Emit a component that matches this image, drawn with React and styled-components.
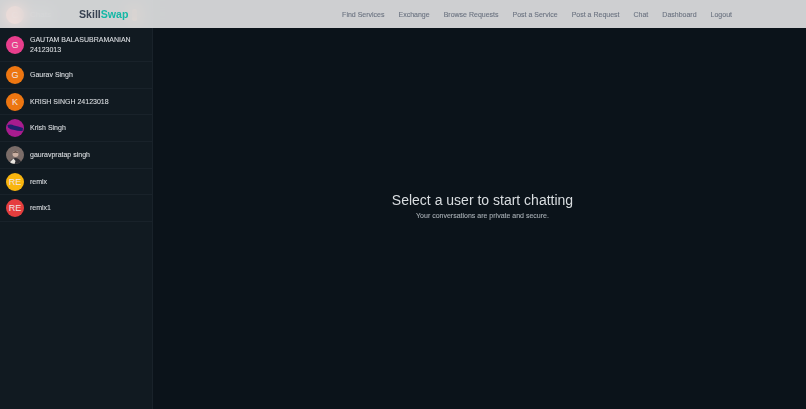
import React from 'react';
import styled, { createGlobalStyle } from 'styled-components';

const Global = createGlobalStyle`
  html, body { margin: 0; padding: 0; height: 100%; background: #0b131a; }
  #root { height: 100%; }
  * { box-sizing: border-box; }
  body { font-family: "Liberation Sans", Arial, sans-serif; overflow: hidden; }
`;

const Page = styled.div`
  display: flex;
  height: 409px;
  width: 806px;
  position: relative;
  overflow: hidden;
`;
const Sidebar = styled.aside`
  width: 153px;
  flex: none;
  background: #111a21;
  border-right: 1px solid #19222a;
  display: flex;
  flex-direction: column;
`;
const SideHead = styled.div`
  height: 29px;
  flex: none;
  display: flex;
  align-items: center;
  justify-content: space-between;
  padding: 0 15px 0 6px;
`;
const HeadLeft = styled.div`
  display: flex;
  align-items: center;
  gap: 6px;
  color: #e6e8ea;
  font-size: 8px;
`;
const Spot = styled.div`
  width: 5px;
  height: 12px;
  background: #f97316;
  border-radius: 3px;
`;
const Row = styled.div`
  display: flex;
  align-items: center;
  gap: 6px;
  padding: 0 6px;
  height: ${p => p.$h}px;
  flex: none;
  border-bottom: 1px solid #19222a;
`;
const Avatar = styled.div`
  width: 18px;
  height: 18px;
  border-radius: 50%;
  flex: none;
  overflow: hidden;
  background: ${p => p.$bg};
  color: #f0e6e6;
  font-size: 9px;
  display: flex;
  align-items: center;
  justify-content: center;
`;
const Name = styled.div`
  color: #dadde0;
  font-size: 7px;
  line-height: 10px;
  -webkit-text-stroke: 0.1px #dadde0;
  filter: blur(0.15px);
`;
const Main = styled.main`
  flex: 1;
  display: flex;
  flex-direction: column;
  align-items: center;
  justify-content: center;
  background: #0b131a;
  padding: 1px 0 0 6px;
`;
const Title = styled.div`
  color: #d9dde0;
  font-size: 14px;
  line-height: 20px;
  filter: blur(0.25px);
`;
const Sub = styled.div`
  color: #a6adb3;
  font-size: 7px;
  line-height: 10px;
  margin-top: 1px;
  -webkit-text-stroke: 0.1px #a6adb3;
  filter: blur(0.15px);
`;
const Header = styled.header`
  position: absolute;
  left: 0;
  top: 0;
  right: 0;
  height: 28px;
  background: rgba(255, 255, 255, 0.8);
  backdrop-filter: blur(8px);
  display: flex;
  align-items: center;
  padding: 0 74px 0 79px;
  justify-content: space-between;
`;
const Logo = styled.div`
  font-weight: 700;
  font-size: 10.6px;
  color: #374151;
  filter: blur(0.2px);
`;
const LogoAccent = styled.span`
  color: #14b8a6;
`;
const Nav = styled.nav`
  display: flex;
  gap: 14px;
  filter: blur(0.15px);
`;
const NavLink = styled.a`
  color: #6b7280;
  font-size: 7px;
  -webkit-text-stroke: 0.1px #6b7280;
`;

const Purple = () => (
  <svg viewBox="0 0 18 18" width="18" height="18">
    <rect width="18" height="18" fill="#a81c8e" />
    <path d="M1.5 6 Q5 4.6 8 6.4 Q12 7 17 9 L16.5 12 Q12 12.4 8.5 11 Q4 10.6 2 8.4 Z" fill="#20206c" />
  </svg>
);
const Photo = () => (
  <svg viewBox="0 0 18 18" width="18" height="18">
    <rect width="18" height="18" fill="#7a6c68" />
    <circle cx="9.5" cy="8" r="3" fill="#cbb0a2" />
    <path d="M6.4 7.4 Q9.5 3 12.6 7.4 Q9.5 5.4 6.4 7.4 Z" fill="#3a2f2b" />
    <path d="M3 18 Q4.5 12.5 9.5 12 Q14.5 12.5 16 18 Z" fill="#2e2e33" />
    <path d="M4 16 L7.5 12.5 L9.5 15 L8.5 18 L4 18 Z" fill="#e9e6e0" />
  </svg>
);

const people = [
  { n: <>GAUTAM BALASUBRAMANIAN<br />24123013</>, l: 'G', bg: '#e83e8c', h: 33 },
  { n: 'Gaurav Singh', l: 'G', bg: '#ed7611', h: 27 },
  { n: 'KRISH SINGH 24123018', l: 'K', bg: '#ed7611', h: 26 },
  { n: 'Krish Singh', pic: <Purple />, h: 27 },
  { n: 'gauravpratap singh', pic: <Photo />, h: 27 },
  { n: 'remix', l: 'RE', bg: '#f9b50e', h: 26 },
  { n: 'remix1', l: 'RE', bg: '#e53e3e', h: 27 },
];
const links = ['Find Services', 'Exchange', 'Browse Requests', 'Post a Service', 'Post a Request', 'Chat', 'Dashboard', 'Logout'];

export default function App() {
  return (
    <Page>
      <Global />
      <Sidebar>
        <SideHead>
          <HeadLeft>
            <Avatar $bg="#f97050">C</Avatar>
            Chats
          </HeadLeft>
          <Spot />
        </SideHead>
        {people.map((p, i) => (
          <Row key={i} $h={p.h}>
            <Avatar $bg={p.bg}>{p.pic || p.l}</Avatar>
            <Name>{p.n}</Name>
          </Row>
        ))}
      </Sidebar>
      <Main>
        <Title>Select a user to start chatting</Title>
        <Sub>Your conversations are private and secure.</Sub>
      </Main>
      <Header>
        <Logo>Skill<LogoAccent>Swap</LogoAccent></Logo>
        <Nav>
          {links.map(l => <NavLink key={l}>{l}</NavLink>)}
        </Nav>
      </Header>
    </Page>
  );
}
